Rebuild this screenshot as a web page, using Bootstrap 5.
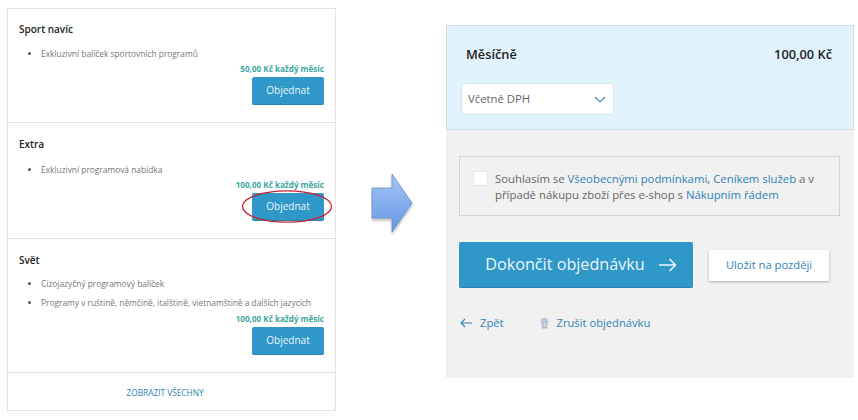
<!DOCTYPE html>
<html lang="cs">
<head>
<meta charset="utf-8">
<title>Objednávka</title>
<link href="https://cdn.jsdelivr.net/npm/bootstrap@5.3.0/dist/css/bootstrap.min.css" rel="stylesheet">
<style>
html,body{height:420px;overflow:hidden}
body{background:#fff;font-family:"Open Sans",sans-serif;color:#444;padding:8px 4px 0 7px}
a{text-decoration:none;color:#2f83b5}
.offers{width:329px;height:403px;border:1px solid #e4e4e4;flex:none;border-radius:0}
.offers .list-group-item{border-color:#e4e4e4;padding:0 11px 0 11px;border-left:0;border-right:0;border-radius:0}
.offers .list-group-item:first-child{border-top:0}
.offers .list-group-item:last-child{border-bottom:0}
.item-a{height:115px;padding-top:13px!important}
.item-b{height:116px;padding-top:14px!important}
.item-c{height:135px;padding-top:14px!important}
.item-more{height:37px;font-size:8.3px;line-height:35px;text-align:center;padding-top:2px!important;padding-right:24px!important}
.offer-title{font-size:10px;font-weight:600;color:#222;line-height:15px;margin:0}
.offer-list{font-size:8.37px;color:#777;margin:11px 0 0;padding-left:22px;line-height:12px}
.item-b .offer-list{margin-top:12px}
.item-c .offer-list{margin-top:10px}
.offer-list li{margin-bottom:7.5px}
.offer-list li::marker{color:#555}
.offer-list li:last-child{margin-bottom:0}
.price-line{font-size:8.1px;font-weight:700;color:#3ba79e;line-height:12px;margin-top:3px;text-align:right}
.item-c .price-line{margin-top:4px}
.order-wrap{display:flex;justify-content:flex-end;margin-top:2px}
.order-btn{width:72px;height:28px;padding:0;font-size:10px;line-height:27px;background:#3097c9;border:0;border-bottom:1px solid #2b82ae;border-radius:2px;color:#eaf6fb;position:relative}
.order-ring{position:absolute;left:-11px;top:-3px;width:92px;height:33px;pointer-events:none}
.arrow-box{width:110px;flex:none;padding:165px 0 0 35px}
.panel-box{width:408px;height:353px;margin-top:17px;background:#f1f1f1;flex:none}
.plan-box{height:105px;background:#e1f3fd;border:1px solid #cfdfe7;padding:18px 21px 0 14px}
.plan-head{font-size:12.8px;font-weight:600;color:#222;line-height:20px;padding-left:5px}
.vat-select{width:153px;height:32px;margin-top:19px;border:1px solid #d9e3e8;border-radius:3px;background:#fff;font-size:11.3px;color:#666;padding:0 7px 0 6px}
.terms-box{margin:26px 14px 0 13px;height:60px;border:1px solid #d3d3d3;padding:14px 8px 0 13px;font-size:11.35px;line-height:16px;color:#666;gap:7px}
.terms-check{width:15px;height:15px;background:#fff;border:1px solid #e6e6e6;border-radius:1px;flex:none;margin-top:0}
.action-row{padding:26px 0 0 13px;gap:16px}
.finish-btn{width:234px;height:46px;background:#3097c9;border:0;border-bottom:1px solid #2b82ae;border-radius:2px;color:#eaf6fb;font-size:16.2px;padding:0 0 0 10px;gap:14px}
.later-btn{width:120px;height:31px;background:#fff;border:0;border-radius:1px;box-shadow:0 1px 3px rgba(0,0,0,.28);font-size:11.2px;color:#2f83b5;padding:0}
.links-row{padding:27px 0 0 14px;font-size:11.2px;line-height:16px;gap:36px}
</style>
</head>
<body>
<div class="d-flex">
  <div class="offers list-group">
    <div class="list-group-item item-a">
      <h6 class="offer-title">Sport navíc</h6>
      <ul class="offer-list"><li>Exkluzivní balíček sportovních programů</li></ul>
      <div class="price-line">50,00 Kč každý měsíc</div>
      <div class="order-wrap"><button class="btn order-btn">Objednat</button></div>
    </div>
    <div class="list-group-item item-b">
      <h6 class="offer-title">Extra</h6>
      <ul class="offer-list"><li>Exkluzivní programová nabídka</li></ul>
      <div class="price-line">100,00 Kč každý měsíc</div>
      <div class="order-wrap"><button class="btn order-btn">Objednat
        <svg class="order-ring" viewBox="0 0 92 33"><ellipse cx="46" cy="16.5" rx="44.5" ry="15.7" fill="none" stroke="#c8202f" stroke-width="1.3"/></svg>
      </button></div>
    </div>
    <div class="list-group-item item-c">
      <h6 class="offer-title">Svět</h6>
      <ul class="offer-list"><li>Cizojazyčný programový balíček</li><li>Programy v ruštině, němčině, italštině, vietnamštině a dalších jazycích</li></ul>
      <div class="price-line">100,00 Kč každý měsíc</div>
      <div class="order-wrap"><button class="btn order-btn">Objednat</button></div>
    </div>
    <div class="list-group-item item-more"><a href="#">ZOBRAZIT VŠECHNY</a></div>
  </div>
  <div class="arrow-box">
    <svg width="46" height="64" viewBox="0 0 46 64">
      <defs>
        <linearGradient id="ag" x1="0" y1="0" x2="0" y2="1"><stop offset="0" stop-color="#a6c6f4"/><stop offset="1" stop-color="#6496e6"/></linearGradient>
        <filter id="as" x="-20%" y="-20%" width="140%" height="140%"><feDropShadow dx="0" dy="2" stdDeviation="1.5" flood-color="#000" flood-opacity=".3"/></filter>
      </defs>
      <path d="M1 15H21V1L41 30 21 59V45H1Z" fill="url(#ag)" stroke="#5f86bd" stroke-width=".7" filter="url(#as)"/>
    </svg>
  </div>
  <div class="panel-box">
    <div class="plan-box">
      <div class="plan-head d-flex justify-content-between"><span>Měsíčně</span><span>100,00 Kč</span></div>
      <div class="vat-select d-flex align-items-center justify-content-between">
        <span>Včetně DPH</span>
        <svg width="12" height="7" viewBox="0 0 12 7"><path d="M1 1l5 5 5-5" fill="none" stroke="#4a8fb8" stroke-width="1.2"/></svg>
      </div>
    </div>
    <div class="terms-box d-flex">
      <span class="terms-check"></span>
      <div>Souhlasím se <a href="#">Všeobecnými podmínkami</a>, <a href="#">Ceníkem služeb</a> a v případě nákupu zboží přes e-shop s <a href="#">Nákupním řádem</a></div>
    </div>
    <div class="action-row d-flex align-items-center">
      <button class="btn finish-btn d-flex align-items-center justify-content-center">
        <span>Dokončit objednávku</span>
        <svg width="18" height="14" viewBox="0 0 18 14"><path d="M0 7h16.5M10.5 1l6 6-6 6" fill="none" stroke="#eaf6fb" stroke-width="1.5"/></svg>
      </button>
      <button class="btn later-btn">Uložit na později</button>
    </div>
    <div class="links-row d-flex">
      <a href="#" class="d-flex align-items-center gap-2">
        <svg width="12" height="10" viewBox="0 0 12 10"><path d="M12 5H1M5 1L1 5l4 4" fill="none" stroke="#2f83b5" stroke-width="1.1"/></svg>
        <span>Zpět</span>
      </a>
      <a href="#" class="d-flex align-items-center gap-2">
        <svg width="9" height="11" viewBox="0 0 9 11"><path d="M3 1.5V.5h3v1M.5 2h8" fill="none" stroke="#9aa9c4" stroke-width=".9"/><path d="M1.2 3h6.6l-.5 7.5H1.7Z" fill="#aab6cc"/><path d="M3 4.2v5M4.5 4.2v5M6 4.2v5" stroke="#f1f1f1" stroke-width=".6"/></svg>
        <span>Zrušit objednávku</span>
      </a>
    </div>
  </div>
</div>
<script src="https://cdn.jsdelivr.net/npm/bootstrap@5.3.0/dist/js/bootstrap.bundle.min.js"></script>
</body>
</html>
